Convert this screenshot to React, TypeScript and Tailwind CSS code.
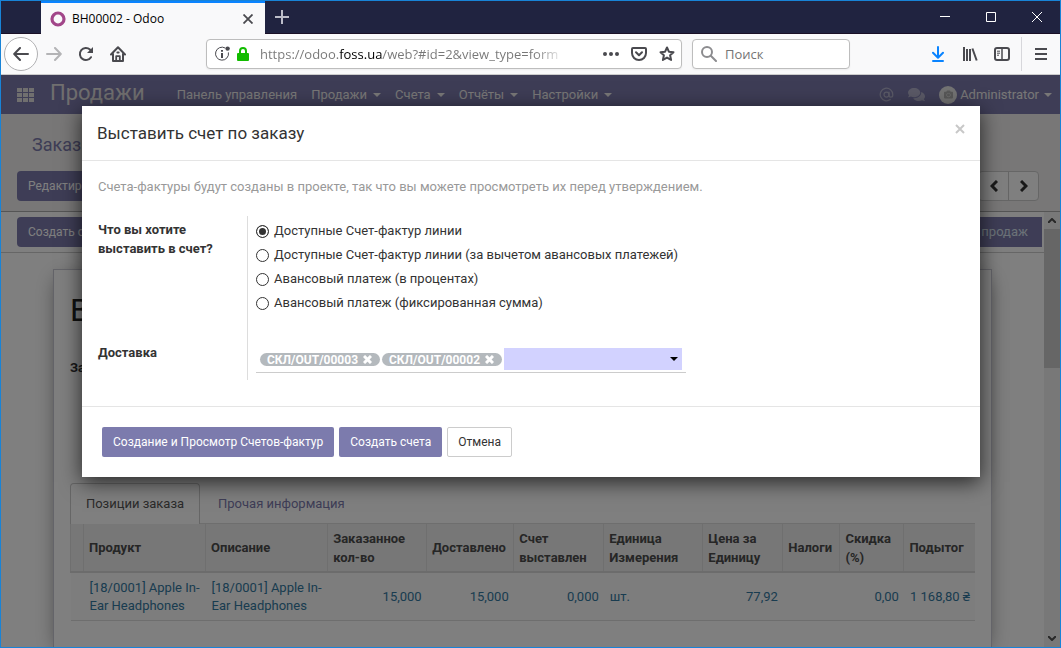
import { useState } from "react";
import { FaCamera, FaComments } from "react-icons/fa";
import { AtSign } from "lucide-react";

const menus = [
  { label: "Панель управления", dropdown: false },
  { label: "Продажи", dropdown: true },
  { label: "Счета", dropdown: true },
  { label: "Отчёты", dropdown: true },
  { label: "Настройки", dropdown: true },
];

const methods = [
  "Доступные Счет-фактур линии",
  "Доступные Счет-фактур линии (за вычетом авансовых платежей)",
  "Авансовый платеж (в процентах)",
  "Авансовый платеж (фиксированная сумма)",
];

const columns = [
  { label: "", width: "w-[13px]" },
  { label: "Продукт", width: "w-[122px]" },
  { label: "Описание", width: "w-[122px]" },
  { label: "Заказанное кол-во", width: "w-[99px]" },
  { label: "Доставлено", width: "w-[87px]" },
  { label: "Счет выставлен", width: "w-[90px]" },
  { label: "Единица Измерения", width: "w-[99px]" },
  { label: "Цена за Единицу", width: "w-20" },
  { label: "Налоги", width: "w-[57px]" },
  { label: "Скидка (%)", width: "w-16" },
  { label: "Подытог", width: "w-[71px]" },
];

const row = [
  { value: "", right: false },
  { value: "[18/0001] Apple In-Ear Headphones", right: false },
  { value: "[18/0001] Apple In-Ear Headphones", right: false },
  { value: "15,000", right: true },
  { value: "15,000", right: true },
  { value: "0,000", right: true },
  { value: "шт.", right: false },
  { value: "77,92", right: true },
  { value: "", right: false },
  { value: "0,00", right: true },
  { value: "1 168,80 ₴", right: true },
];

function Caret() {
  return (
    <svg width="8" height="4" viewBox="0 0 8 4" fill="currentColor">
      <path d="M0 0h8L4 4z" />
    </svg>
  );
}

function TitleBar() {
  return (
    <div className="flex h-[33px] shrink-0 border-b border-[#1a1026] bg-[#202340]">
      <div className="ml-10 flex h-[33px] w-56 items-center border-t-2 border-[#0a84ff] bg-[#f9f9fa] pr-3 pl-[9px]">
        <svg width="16" height="16" viewBox="0 0 16 16" fill="none">
          <circle cx="8" cy="8" r="6" stroke="#a24689" strokeWidth="3.2" />
        </svg>
        <span className="ml-1.5 flex-1 text-xs text-black">BH00002 - Odoo</span>
        <button aria-label="Закрыть вкладку" className="text-[#4a4a4f]">
          <svg width="10" height="10" viewBox="0 0 10 10" stroke="currentColor" strokeWidth="1.8">
            <path d="M.5.5l9 9M9.5.5l-9 9" />
          </svg>
        </button>
      </div>
      <button aria-label="Новая вкладка" className="ml-[10px] text-[#bcbdc9]">
        <svg width="14" height="14" viewBox="0 0 14 14" stroke="currentColor" strokeWidth="2">
          <path d="M7 0v14M0 7h14" />
        </svg>
      </button>
      <div className="ml-auto flex items-center gap-9 pr-[18px] text-white">
        <button aria-label="Свернуть">
          <svg width="10" height="10" viewBox="0 0 10 10" stroke="currentColor">
            <path d="M0 4.5h10" />
          </svg>
        </button>
        <button aria-label="Развернуть">
          <svg width="10" height="10" viewBox="0 0 10 10" fill="none" stroke="currentColor">
            <path d="M.5.5h9v9h-9z" />
          </svg>
        </button>
        <button aria-label="Закрыть">
          <svg width="10" height="10" viewBox="0 0 10 10" stroke="currentColor">
            <path d="M0 0l10 10M10 0L0 10" />
          </svg>
        </button>
      </div>
    </div>
  );
}

function Toolbar() {
  return (
    <div className="flex h-[41px] shrink-0 items-center border-b border-[#cccccc] bg-[#f9f9fa] pl-[3px] text-[#4a4a4f]">
      <button aria-label="Назад" className="flex size-[34px] items-center justify-center rounded-full border border-[#b1b1b3] bg-white">
        <svg width="16" height="14" viewBox="0 0 16 14" fill="none" stroke="currentColor" strokeWidth="2" strokeLinecap="round" strokeLinejoin="round">
          <path d="M15 7H1.5M7 1L1.2 7 7 13" />
        </svg>
      </button>
      <button aria-label="Вперёд" className="ml-2 text-[#b4b4b6]">
        <svg width="16" height="14" viewBox="0 0 16 14" fill="none" stroke="currentColor" strokeWidth="2" strokeLinecap="round" strokeLinejoin="round">
          <path d="M1 7h13.5M9 1l5.8 6L9 13" />
        </svg>
      </button>
      <button aria-label="Обновить" className="ml-4">
        <svg width="16" height="16" viewBox="0 0 16 16" fill="none" stroke="currentColor" strokeWidth="2" strokeLinecap="round">
          <path d="M13 11.2A6 6 0 1 1 12 3.6L13.2 5" />
          <path d="M15 1v6H9z" fill="currentColor" stroke="none" />
        </svg>
      </button>
      <button aria-label="Домой" className="ml-4">
        <svg width="16" height="16" viewBox="0 0 16 16" fill="none" stroke="currentColor" strokeWidth="2" strokeLinecap="round" strokeLinejoin="round">
          <path d="M1 8.5L8 1.3l7 7.2M3 8v7h10V8" />
          <path d="M6.2 15v-4.8h3.6V15" strokeWidth="1.8" />
          <path d="M7.4 6.4h1.2" />
        </svg>
      </button>

      <div className="ml-20 flex h-[30px] w-[476px] items-center rounded-sm border border-[#bdbdbd] bg-white pr-1.5 pl-2 shadow-xs">
        <svg width="16" height="16" viewBox="0 0 16 16" fill="none" stroke="currentColor">
          <path d="M10.2 2A6.5 6.5 0 1 0 13.4 6.4" strokeWidth="1" />
          <path d="M7 7v5" strokeWidth="2" />
          <path d="M7 4v1.8" strokeWidth="2" />
          <circle cx="12.6" cy="2.6" r="2.2" fill="currentColor" stroke="none" />
        </svg>
        <svg className="ml-1.5" width="12" height="14" viewBox="0 0 12 14" fill="none">
          <path d="M3 7V4a3 3 0 0 1 6 0v3" stroke="#12bc00" strokeWidth="2" />
          <rect y="6" width="12" height="8" rx="1" fill="#12bc00" />
        </svg>
        <input
          aria-label="Адрес"
          type="text"
          defaultValue="https://odoo.foss.ua/web?#id=2&view_type=form"
          className="ml-[11px] min-w-0 flex-1 bg-[linear-gradient(to_right,#777_79px,#000_79px,#000_122px,#777_122px,#777_275px,transparent_305px)] bg-clip-text pt-0.5 font-['Open_Sans','Noto_Sans',sans-serif] text-[13px] text-transparent outline-none"
        />
        <div className="flex items-center gap-3">
          <button aria-label="Действия">
            <svg width="16" height="4" viewBox="0 0 16 4" fill="currentColor">
              <circle cx="2" cy="2" r="2" />
              <circle cx="8" cy="2" r="2" />
              <circle cx="14" cy="2" r="2" />
            </svg>
          </button>
          <button aria-label="Pocket">
            <svg width="16" height="14" viewBox="0 0 16 14" fill="none" stroke="currentColor" strokeWidth="2" strokeLinecap="round" strokeLinejoin="round">
              <path d="M2 1h12a1 1 0 0 1 1 1v4a7 7 0 0 1-14 0V2a1 1 0 0 1 1-1z" />
              <path d="M5 5.2l3 3 3-3" />
            </svg>
          </button>
          <button aria-label="Закладка">
            <svg width="16" height="16" viewBox="0 0 16 16" fill="none" stroke="currentColor" strokeWidth="2" strokeLinejoin="round">
              <path d="M8 1.5l1.9 4.2 4.6.5-3.4 3.1 1 4.6L8 11.6l-4.1 2.3 1-4.6L1.5 6.2l4.6-.5z" />
            </svg>
          </button>
        </div>
      </div>

      <div className="ml-[10px] flex h-[30px] w-[158px] items-center rounded-sm border border-[#bdbdbd] bg-white pl-2 shadow-xs">
        <svg width="16" height="16" viewBox="0 0 16 16" fill="none" stroke="#8c8c8f" strokeWidth="2" strokeLinecap="round">
          <circle cx="6" cy="6" r="5" />
          <path d="M9.8 9.8L15 15" />
        </svg>
        <input
          aria-label="Поиск"
          type="search"
          placeholder="Поиск"
          className="ml-2 min-w-0 flex-1 pt-0.5 font-['Open_Sans','Noto_Sans',sans-serif] text-[13px] outline-none placeholder:text-[#757575]"
        />
      </div>

      <div className="ml-auto flex items-center pr-[13px]">
        <button aria-label="Загрузки" className="text-[#0a84ff]">
          <svg width="12" height="16" viewBox="0 0 12 16" fill="none" stroke="currentColor" strokeWidth="2" strokeLinecap="round" strokeLinejoin="round">
            <path d="M6 1v10M1 6.8l5 5 5-5M1 15h10" />
          </svg>
        </button>
        <button aria-label="Библиотека" className="ml-[18px]">
          <svg width="16" height="14" viewBox="0 0 16 14" fill="none" stroke="currentColor" strokeWidth="2">
            <path d="M2 0v14M5 2v12M8 2v12M10.4 1.5l4.3 12" />
          </svg>
        </button>
        <button aria-label="Боковая панель" className="ml-4">
          <svg width="16" height="14" viewBox="0 0 16 14" fill="none" stroke="currentColor" strokeWidth="2">
            <rect x="1" y="1" width="14" height="12" rx="2" />
            <path d="M8 1v12" strokeWidth="1.5" />
            <path d="M3 4.2h3M3 6.2h3M3 8.2h2" strokeWidth="1" />
          </svg>
        </button>
        <span className="ml-[11px] h-[34px] w-px bg-[#d7d7db]" />
        <button aria-label="Меню" className="ml-[13px]">
          <svg width="12" height="12" viewBox="0 0 12 12" stroke="currentColor" strokeWidth="2">
            <path d="M0 1h12M0 6h12M0 11h12" />
          </svg>
        </button>
      </div>
    </div>
  );
}

function NavBar() {
  return (
    <nav className="flex h-[39px] shrink-0 items-center bg-[#7c7bad] pr-2 pl-4 text-[#f0eeee]">
      <svg width="18" height="14" viewBox="0 0 18 14" fill="#e0dede">
        <path d="M0 0h5v4H0zM6 0h5v4H6zM12 0h5v4h-5zM0 5h5v4H0zM6 5h5v4H6zM12 5h5v4h-5zM0 10h5v4H0zM6 10h5v4H6zM12 10h5v4h-5z" />
      </svg>
      <a href="#" className="ml-[15px] pb-1 text-[22px] leading-8 text-[#e0dede]">
        Продажи
      </a>
      <div className="ml-8 flex gap-3.5 text-[13px]">
        {menus.map((m) => (
          <a key={m.label} href="#" className="flex items-center gap-1.5">
            {m.label}
            {m.dropdown && <Caret />}
          </a>
        ))}
      </div>
      <div className="ml-auto flex items-center text-[13px]">
        <AtSign size={15} className="text-[#b4b3cc]" />
        <FaComments size={17} className="ml-3.5 text-[#b4b3cc]" />
        <span className="ml-3.5 flex size-[18px] items-center justify-center rounded-full bg-[#e6e6e6] text-[#b0b0b0]">
          <FaCamera size={9} />
        </span>
        <a href="#" className="ml-[3px] flex items-center gap-[5px]">
          Administrator
          <Caret />
        </a>
      </div>
    </nav>
  );
}

function OrderForm() {
  return (
    <div className="flex min-h-0 flex-1 flex-col">
      <div className="flex h-[98px] shrink-0 flex-col border-b border-[#aaaaaa] bg-[#f0eeee] px-4 pt-[17px]">
        <h2 className="pl-[15px] text-lg leading-7 text-[#7c7bad]">Заказы</h2>
        <div className="mt-3 flex justify-between">
          <button className="h-[30px] rounded-sm bg-[#7c7bad] px-[11px] text-xs text-white">Редактировать</button>
          <div className="mr-[5px] flex h-[30px] divide-x divide-[#cccccc] rounded-sm border border-[#cccccc] bg-white text-[#333333]">
            <button aria-label="Предыдущий" className="flex w-[30px] items-center justify-center">
              <svg width="8" height="12" viewBox="0 0 8 12" fill="none" stroke="currentColor" strokeWidth="3">
                <path d="M7 1L2 6l5 5" />
              </svg>
            </button>
            <button aria-label="Следующий" className="flex w-[29px] items-center justify-center">
              <svg width="8" height="12" viewBox="0 0 8 12" fill="none" stroke="currentColor" strokeWidth="3">
                <path d="M1 1l5 5-5 5" />
              </svg>
            </button>
          </div>
        </div>
      </div>

      <div className="flex min-h-0 flex-1 bg-white">
        <div className="flex min-w-0 flex-1 flex-col">
          <div className="flex h-[41px] shrink-0 items-center justify-between border-b border-[#cccccc] pr-0.5 pl-4">
            <button className="h-[30px] rounded-sm bg-[#7c7bad] px-[11px] text-xs text-white">Создать счёт</button>
            <button className="h-[30px] bg-[#7c7bad] px-3.5 text-[13px] text-[#d8e4f0]">Заказ продаж</button>
          </div>
          <div className="mx-[52px] mt-4 flex-1 border border-b-0 border-[#c8c8d3] px-4 shadow-[0_5px_20px_-5px_#777777]">
            <h1 className="mt-5 text-[32px] leading-10 text-[#222222]">BH00002</h1>
            <p className="mt-7 text-[13px] leading-5 font-bold">Заказчик</p>
            <div className="mt-[105px] flex border-b border-[#dddddd] text-[13px]">
              <button className="-mb-px h-[41px] w-[130px] rounded-t-sm border border-b-0 border-[#cccccc] bg-white text-[#555555]">
                Позиции заказа
              </button>
              <button className="ml-1 h-10 px-3.5 pt-0.5 text-[#7c7bad]">Прочая информация</button>
            </div>
            <table className="w-full table-fixed border-collapse text-[13px]">
              <thead>
                <tr className="h-12 border-b-2 border-[#d8d8d8] bg-[#eeeeee] text-left leading-[19px] text-[#4c4c4c]">
                  {columns.map((c, i) => (
                    <th key={i} className={`${c.width} border-l border-[#dfdfdf] pl-[5px] align-middle font-bold`}>
                      {c.label}
                    </th>
                  ))}
                </tr>
              </thead>
              <tbody>
                <tr className="h-12 border-b border-[#dddddd] bg-[#fafafa] leading-[18px] text-[#3379a0]">
                  {row.map((c, i) => (
                    <td key={i} className={c.right ? "pt-0.5 pr-[5px] text-right whitespace-nowrap" : "pt-0.5 pl-1.5"}>
                      {c.value}
                    </td>
                  ))}
                </tr>
              </tbody>
            </table>
          </div>
        </div>
        <div className="flex w-4 shrink-0 flex-col items-center bg-[#f0f0f0] text-[#505050]">
          <svg className="my-1.5 shrink-0" width="8" height="5" viewBox="0 0 8 5" fill="none" stroke="currentColor" strokeWidth="2">
            <path d="M0 5l4-4 4 4" />
          </svg>
          <div className="h-[139px] w-full bg-[#cdcdcd]" />
          <svg className="mt-auto mb-1.5 shrink-0" width="8" height="5" viewBox="0 0 8 5" fill="none" stroke="currentColor" strokeWidth="2">
            <path d="M0 0l4 4 4-4" />
          </svg>
        </div>
      </div>
    </div>
  );
}

function InvoiceDialog() {
  const [method, setMethod] = useState(0);
  const [pickings, setPickings] = useState(["СКЛ/OUT/00003", "СКЛ/OUT/00002"]);

  return (
    <div className="absolute inset-0 bg-black/50 pt-[31px] pr-20 pl-[81px]">
      <div role="dialog" aria-label="Выставить счет по заказу" className="bg-white text-[13px] text-[#333333] shadow-[0_5px_20px_rgba(0,0,0,0.7)]">
        <div className="flex h-[55px] items-center justify-between border-b border-[#e5e5e5] pr-[15px] pl-[15px]">
          <h4 className="pt-0.5 text-[17px]">Выставить счет по заказу</h4>
          <button aria-label="Закрыть" className="mb-2 text-[#c8c8c8]">
            <svg width="10" height="10" viewBox="0 0 10 10" stroke="currentColor" strokeWidth="2">
              <path d="M1 1l8 8M9 1L1 9" />
            </svg>
          </button>
        </div>

        <div className="border-b border-[#e5e5e5] px-4 pt-4 pb-[26px]">
          <p className="leading-5 text-[#999999]">
            Счета-фактуры будут созданы в проекте, так что вы можете просмотреть их перед утверждением.
          </p>
          <div className="mt-[19px] flex h-[164px]">
            <div className="w-[150px] shrink-0 border-r border-[#dddddd] pt-1 leading-[19px] font-bold">
              <p className="w-32">Что вы хотите выставить в счет?</p>
              <label htmlFor="pickings" className="mt-[85px] block">
                Доставка
              </label>
            </div>
            <div className="w-[438px] pt-[3px] pl-2">
              {methods.map((m, i) => (
                <label key={m} className="flex h-6 items-center gap-[5px]">
                  <input
                    type="radio"
                    name="method"
                    checked={method === i}
                    onChange={() => setMethod(i)}
                    className="size-[13px] appearance-none rounded-full border border-[#333333] bg-white checked:bg-[#333333] checked:shadow-[inset_0_0_0_2px_white]"
                  />
                  {m}
                </label>
              ))}
              <div className="mt-[33px] flex h-[25px] items-start gap-0.5 border-b border-[#cccccc] pr-1 pl-1">
                {pickings.map((p) => (
                  <span
                    key={p}
                    className="mt-[5px] flex h-[13px] items-center gap-1 overflow-hidden rounded-full bg-[#b4b9bd] px-[7px] text-xs leading-3 font-bold text-white"
                  >
                    {p}
                    <button
                      aria-label="Удалить"
                      className="flex w-[11px] justify-center"
                      onClick={() => setPickings(pickings.filter((x) => x !== p))}
                    >
                      <svg width="9" height="9" viewBox="0 0 9 9" stroke="currentColor" strokeWidth="3">
                        <path d="M1 1l7 7M8 1L1 8" />
                      </svg>
                    </button>
                  </span>
                ))}
                <div className="flex h-[22px] flex-1 items-center bg-[#d2d2ff] pr-1 text-black">
                  <input id="pickings" type="text" className="min-w-0 flex-1 outline-none" />
                  <Caret />
                </div>
              </div>
            </div>
          </div>
        </div>

        <div className="flex gap-[5px] px-5 py-5 text-xs">
          <button className="h-[30px] rounded-xs bg-[#7c7bad] px-[11px] text-white">Создание и Просмотр Счетов-фактур</button>
          <button className="h-[30px] rounded-xs bg-[#7c7bad] px-[11px] text-white">Создать счета</button>
          <button className="h-[30px] rounded-xs border border-[#cccccc] bg-white px-[10px]">Отмена</button>
        </div>
      </div>
    </div>
  );
}

export default function App() {
  return (
    <div className="flex h-screen flex-col overflow-hidden border border-[#1883d7] font-['Open_Sans','Noto_Sans',sans-serif]">
      <TitleBar />
      <Toolbar />
      <main className="relative flex min-h-0 flex-1 flex-col overflow-hidden font-[Roboto,'Noto_Sans',sans-serif] text-[#333333]">
        <NavBar />
        <OrderForm />
        <InvoiceDialog />
      </main>
    </div>
  );
}
